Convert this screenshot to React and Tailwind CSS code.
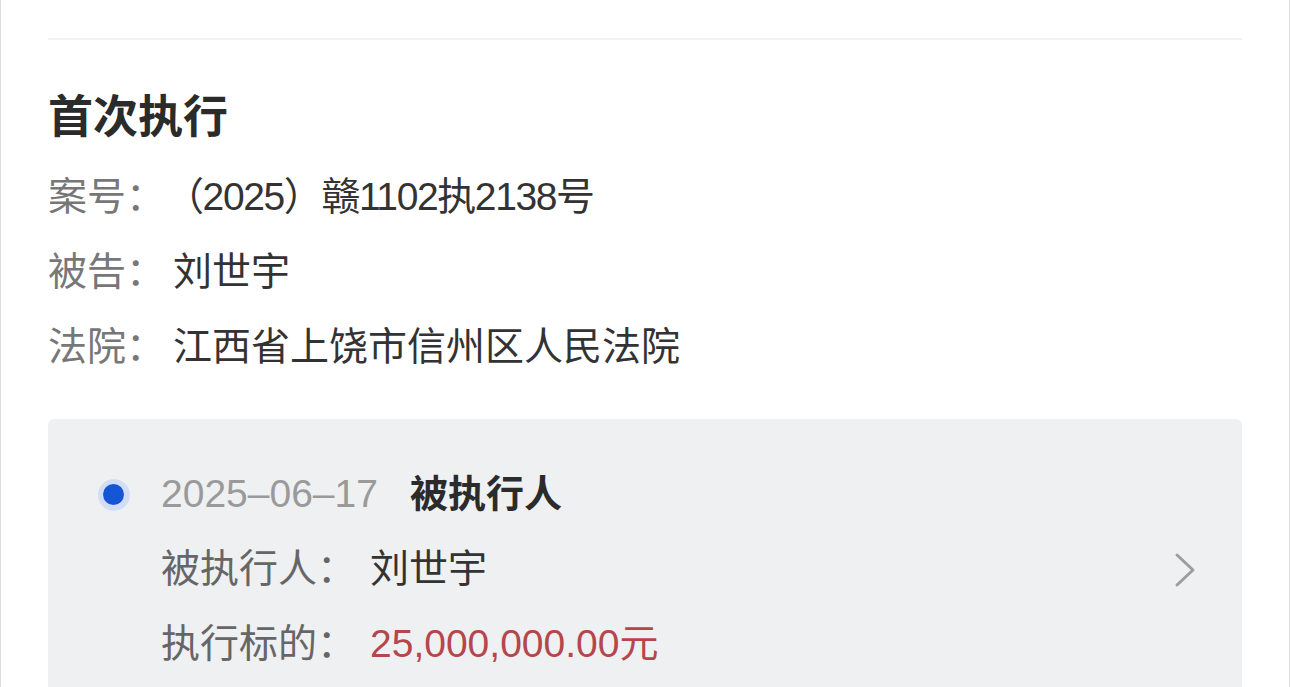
function Row({ label, children }) {
    return (
        <div className="flex items-center h-[75px]">
            <span className="text-[#777]">{label}</span>
            <span className="text-[#333]">{children}</span>
        </div>
    )
}

function App() {
    return (
        <div
            className="w-[1290px] h-[687px] overflow-hidden bg-white border-x border-[#ddd]"
            style={{ fontFamily: '"Liberation Sans", "Noto Sans CJK SC", sans-serif' }}
        >
            <div className="px-[47px] pt-[38px]">
                <div className="border-t-2 border-[#f2f2f2]"></div>

                <h2 className="mt-[48px] h-[60px] leading-[60px] text-[45px] font-bold text-[#2b2b2b]">首次执行</h2>

                <div className="mt-[12px] text-[39px]">
                    <Row label="案号：">
                        <span className="tracking-[-1.4px]">（2025）赣1102执2138号</span>
                    </Row>
                    <Row label="被告：">
                        <span className="ml-[8px]">刘世宇</span>
                    </Row>
                    <Row label="法院：">
                        <span className="ml-[8px]">江西省上饶市信州区人民法院</span>
                    </Row>
                </div>

                <div className="mt-[34px] h-[300px] bg-[#eff0f2] rounded-t-md pt-[38px] pr-[44px] flex text-[39px]">
                    <div className="w-[113px] h-[75px] flex items-center justify-center pl-[20px] pr-[2px]">
                        <div className="w-[32px] h-[32px] rounded-full bg-[#d3def6] flex items-center justify-center">
                            <div className="w-[21px] h-[21px] rounded-full bg-[#1456d6]"></div>
                        </div>
                    </div>
                    <div className="flex-1">
                        <div className="flex items-center h-[75px]">
                            <span className="text-[#9a9a9a] text-[39px]">2025–06–17</span>
                            <span className="ml-[32px] font-bold text-[#2b2b2b] text-[38px]">被执行人</span>
                        </div>
                        <div className="flex items-center justify-between h-[75px]">
                            <div>
                                <span className="text-[#666]">被执行人：</span>
                                <span className="ml-[14px] text-[#333]">刘世宇</span>
                            </div>
                            <svg width="26" height="38" viewBox="0 0 26 38" fill="none" stroke="#9d9d9d" strokeWidth="3" strokeLinecap="round" strokeLinejoin="round">
                                <path d="M5 4 L21 19 L5 34" />
                            </svg>
                        </div>
                        <div className="flex items-center h-[75px]">
                            <span className="text-[#666]">执行标的：</span>
                            <span className="ml-[14px] text-[#b4464c]">25,000,000.00元</span>
                        </div>
                    </div>
                </div>
            </div>
        </div>
    )
}

export default App;
